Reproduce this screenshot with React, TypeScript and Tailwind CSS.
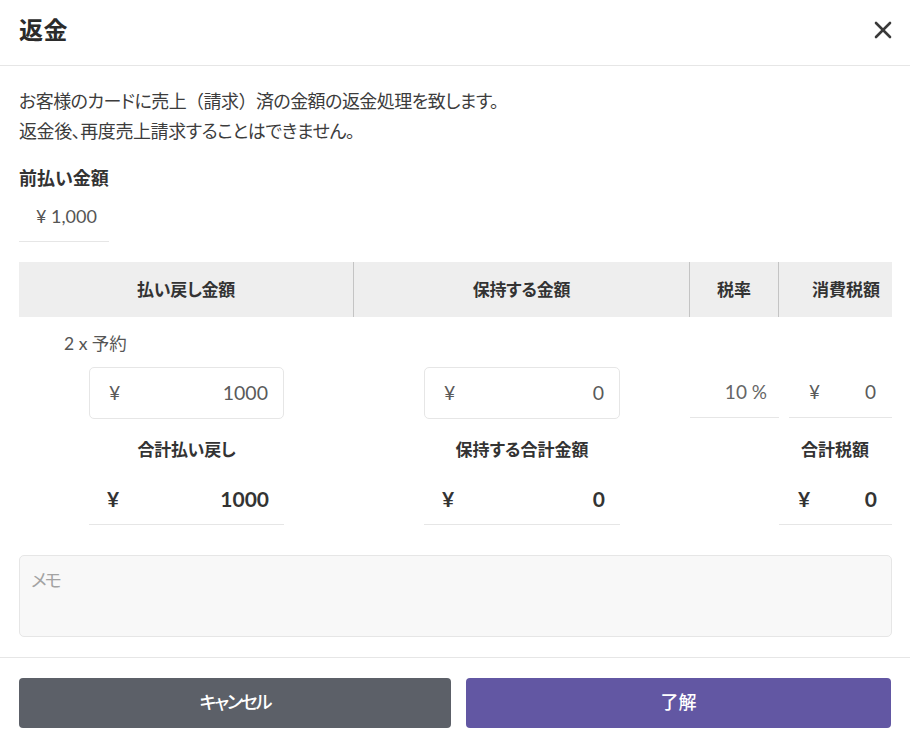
import { X } from "lucide-react";

const font = "font-['Lato','Noto_Sans_CJK_JP',sans-serif] [font-feature-settings:'palt'] [text-spacing-trim:space-all]";

const headers = [
  { label: "払い戻し金額", className: "border-r border-[#c4c4c4] tracking-[-0.3px]" },
  { label: "保持する金額", className: "border-r border-[#c4c4c4] tracking-[-0.2px]" },
  { label: "税率", className: "border-r border-[#c4c4c4]" },
  { label: "消費税額", className: "pl-[33px] !justify-start" },
];

const Amount = ({ value, className, yen }: { value: string; className: string; yen: string }) => (
  <div className={`flex items-center justify-between ${className}`}>
    <span className={yen}>¥</span>
    <span>{value}</span>
  </div>
);

const App = () => {
  return (
    <div className={`${font} w-[910px] h-[745px] bg-white text-[#333] overflow-hidden`}>
      <header className="h-[66px] border-b border-[#e6e6e6] flex items-center justify-between pb-[6px] pl-[19px] pr-[13px]">
        <h1 className="text-[24px] font-bold text-[#2b2b2b] tracking-[0.5px]">返金</h1>
        <X className="w-[28px] h-[28px] text-[#3a3a3a]" strokeWidth={2.25} />
      </header>

      <main className="px-[19px] pr-[18px]">
        <p className="mt-[20px] text-[18px] leading-[30px] text-[#3c3c3c]">
          <span className="tracking-[-0.55px]">
            お客様のカードに売上<span className="[font-feature-settings:normal]">（</span>請求<span className="[font-feature-settings:normal]">）</span>済の金額の返金処理を致します。
          </span>
          <br />
          <span className="tracking-[-0.43px]">返金後、再度売上請求することはできません。</span>
        </p>
        <h2 className="mt-[17px] text-[18px] leading-[30px] font-bold text-[#333]">前払い金額</h2>
        <div className="w-[90px] h-[49px] border-b border-[#e6e6e6] pl-[17px] pb-[1px] flex items-center text-[18px] text-[#555]">
          ¥ 1,000
        </div>

        <div className="mt-[20px] grid grid-cols-[335px_336px_89px_113px]">
          {headers.map((h) => (
            <div
              key={h.label}
              className={`h-[55px] bg-[#eeeeee] flex items-center justify-center text-[17px] font-bold text-[#333] ${h.className}`}
            >
              {h.label}
            </div>
          ))}

          <div className="col-span-4 h-[50px] pl-[45px] pt-[5px] flex items-center text-[17.5px] text-[#555]">2 x 予約</div>

          <div className="pl-[70px]">
            <Amount
              value="1000"
              yen="ml-[-1px]"
              className="w-[195px] h-[52px] border border-[#e6e6e6] rounded-[5px] pl-[20px] pr-[15px] text-[19.5px] text-[#5a5a5a]"
            />
          </div>
          <div className="pl-[70px]">
            <Amount
              value="0"
              yen="ml-[-1px]"
              className="w-[196px] h-[52px] border border-[#e6e6e6] rounded-[5px] pl-[20px] pr-[15px] text-[19.5px] text-[#5a5a5a]"
            />
          </div>
          <div className="h-[51px] border-b border-[#e6e6e6] flex items-center justify-end pr-[12px] text-[19px] text-[#666]">
            10 %
          </div>
          <div className="pl-[10px]">
            <Amount
              value="0"
              yen=""
              className="h-[51px] border-b border-[#e6e6e6] pl-[20px] pr-[16px] text-[19px] text-[#5a5a5a]"
            />
          </div>

          <div className="h-[55px] pl-[70px] pt-[6px] flex items-center">
            <span className="w-[195px] text-center text-[17px] font-bold text-[#333] tracking-[-0.3px]">合計払い戻し</span>
          </div>
          <div className="h-[55px] pl-[70px] pt-[6px] flex items-center">
            <span className="w-[196px] text-center text-[17px] font-bold text-[#333]">保持する合計金額</span>
          </div>
          <div />
          <div className="h-[55px] pt-[6px] flex items-center justify-center pr-[1px] text-[17px] font-bold text-[#333]">
            合計税額
          </div>

          <div className="pl-[70px]">
            <Amount
              value="1000"
              yen=""
              className="w-[195px] h-[51px] border-b border-[#e6e6e6] pl-[18px] pr-[15px] text-[21px] font-bold text-[#333]"
            />
          </div>
          <div className="pl-[70px]">
            <Amount
              value="0"
              yen=""
              className="w-[196px] h-[51px] border-b border-[#e6e6e6] pl-[18px] pr-[15px] text-[21px] font-bold text-[#333]"
            />
          </div>
          <div />
          <Amount
            value="0"
            yen=""
            className="h-[51px] border-b border-[#e6e6e6] pl-[19px] pr-[15px] text-[21px] font-bold text-[#333]"
          />
        </div>

        <div className="mt-[30px] h-[82px] bg-[#f8f8f8] border border-[#e6e6e6] rounded-[5px] pl-[11px] pt-[11px] text-[18px] leading-[27px] text-[#a3a3a3] tracking-[-2px]">
          メモ
        </div>
      </main>

      <footer className="mt-[20px] border-t border-[#e6e6e6] pt-[20px] pl-[19px] pr-[19px] flex gap-[15px]">
        <button className="w-[432px] h-[50px] pb-[1px] rounded-[4px] bg-[#5c6068] text-white text-[18px] font-medium tracking-[-2.2px]">
          キャンセル
        </button>
        <button className="w-[425px] h-[50px] pb-[1px] rounded-[4px] bg-[#6257a3] text-white text-[18px] font-medium">
          了解
        </button>
      </footer>
    </div>
  );
};

export default App;
